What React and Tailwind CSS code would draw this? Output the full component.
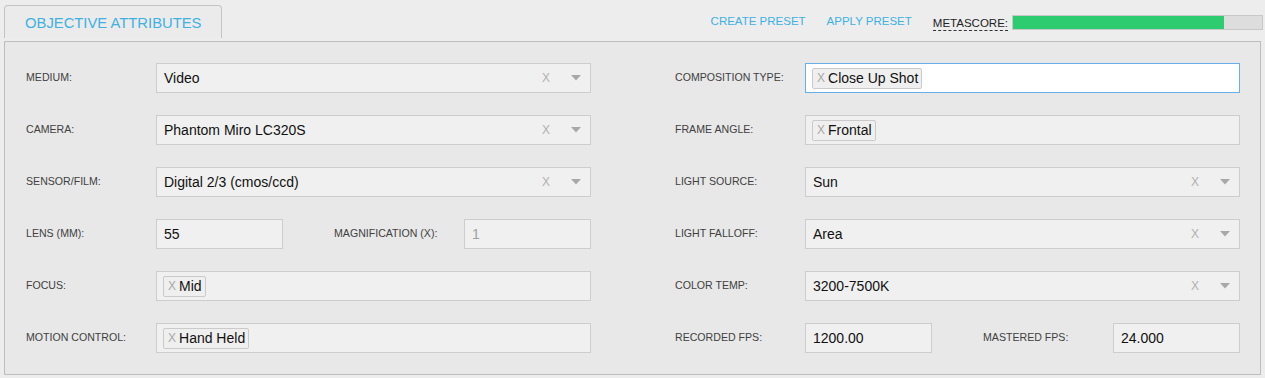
import React from "react";

const font = { fontFamily: '"Liberation Sans", Arial, Helvetica, sans-serif' };

function Label({ children, className = "" }) {
  return (
    <div className={`w-[130px] shrink-0 text-[10.6px] text-[#404040] uppercase ${className}`}>
      {children}
    </div>
  );
}

function Caret() {
  return (
    <svg width="10" height="6" viewBox="0 0 10 6">
      <path d="M0 0 L10 0 L5 5.5 Z" fill="#a8a8a8" />
    </svg>
  );
}

function Select({ value }) {
  return (
    <div className="flex-1 h-[30px] border border-[#cdcdcd] bg-[#f0f0f0] flex items-center pl-[7px] pr-[9px]">
      <span className="flex-1 text-[14px] text-[#111]">{value}</span>
      <span className="text-[12px] text-[#b0b0b0] mr-[21px] leading-none">X</span>
      <Caret />
    </div>
  );
}

function TextInput({ value, muted, w = "w-[127px]" }) {
  return (
    <div className={`${w} h-[30px] border border-[#cdcdcd] bg-[#f0f0f0] flex items-center pl-[7px] text-[14px] ${muted ? "text-[#a0a0a0]" : "text-[#111]"}`}>
      {value}
    </div>
  );
}

function Tag({ text }) {
  return (
    <span className="h-[21px] inline-flex items-center border border-[#cacaca] bg-[#efefef] rounded-[2px] pl-[4px] pr-[3px] text-[14px] text-[#111]">
      <span className="text-[12px] text-[#a8a8a8] mr-[3px]">X</span>
      {text}
    </span>
  );
}

function TagInput({ tags, focused }) {
  return (
    <div
      className={`flex-1 h-[30px] flex items-center pl-[6px] ${
        focused ? "border border-[#6aaee8] bg-white" : "border border-[#cdcdcd] bg-[#f0f0f0]"
      }`}
    >
      {tags.map((t) => (
        <Tag key={t} text={t} />
      ))}
    </div>
  );
}

function Row({ children }) {
  return <div className="flex items-center h-[30px]">{children}</div>;
}

export default function App() {
  return (
    <div className="w-[1265px] h-[378px] bg-[#ededed] overflow-hidden" style={font}>
      <div className="flex h-[41px] pr-[2px]">
        <div className="ml-[4px] mt-[5px] w-[218px] h-[33px] border border-b-0 border-[#c4c4c4] rounded-t-[4px] bg-[#ebebeb] pl-[20px] pt-[6px] text-[14.8px] text-[#3fb0e4]">
          OBJECTIVE ATTRIBUTES
        </div>
        <div className="ml-auto flex items-center pt-[3px]">
          <span className="text-[11.5px] text-[#3fb0e4] mr-[21px]">CREATE PRESET</span>
          <span className="text-[11.5px] text-[#3fb0e4] mr-[21px]">APPLY PRESET</span>
          <span className="text-[11.5px] text-[#222] border-b border-dashed border-[#333] leading-[14px] mr-[4px] mt-[2px]">
            METASCORE:
          </span>
          <div className="w-[251px] h-[15px] border border-[#c8c8c8] bg-[#dddddd]">
            <div className="h-full w-[211px] bg-[#2ecc71]" />
          </div>
        </div>
      </div>
      <div className="ml-[4px] w-[1257px] h-[334px] border border-[#bdbdbd] bg-[#e8e8e8] pl-[21px] pr-[19px] pt-[21px]">
        <div className="grid grid-cols-[565px_565px] gap-x-[84px]">
          <div className="flex flex-col gap-[22px]">
            <Row>
              <Label>Medium:</Label>
              <Select value="Video" />
            </Row>
            <Row>
              <Label>Camera:</Label>
              <Select value="Phantom Miro LC320S" />
            </Row>
            <Row>
              <Label>Sensor/Film:</Label>
              <Select value="Digital 2/3 (cmos/ccd)" />
            </Row>
            <Row>
              <Label>Lens (mm):</Label>
              <TextInput value="55" />
              <div className="w-[51px]" />
              <Label>Magnification (x):</Label>
              <TextInput value="1" muted />
            </Row>
            <Row>
              <Label>Focus:</Label>
              <TagInput tags={["Mid"]} />
            </Row>
            <Row>
              <Label>Motion Control:</Label>
              <TagInput tags={["Hand Held"]} />
            </Row>
          </div>
          <div className="flex flex-col gap-[22px]">
            <Row>
              <Label>Composition Type:</Label>
              <TagInput tags={["Close Up Shot"]} focused />
            </Row>
            <Row>
              <Label>Frame Angle:</Label>
              <TagInput tags={["Frontal"]} />
            </Row>
            <Row>
              <Label>Light Source:</Label>
              <Select value="Sun" />
            </Row>
            <Row>
              <Label>Light Falloff:</Label>
              <Select value="Area" />
            </Row>
            <Row>
              <Label>Color Temp:</Label>
              <Select value="3200-7500K" />
            </Row>
            <Row>
              <Label>Recorded FPS:</Label>
              <TextInput value="1200.00" />
              <div className="w-[51px]" />
              <Label>Mastered FPS:</Label>
              <TextInput value="24.000" />
            </Row>
          </div>
        </div>
      </div>
    </div>
  );
}
